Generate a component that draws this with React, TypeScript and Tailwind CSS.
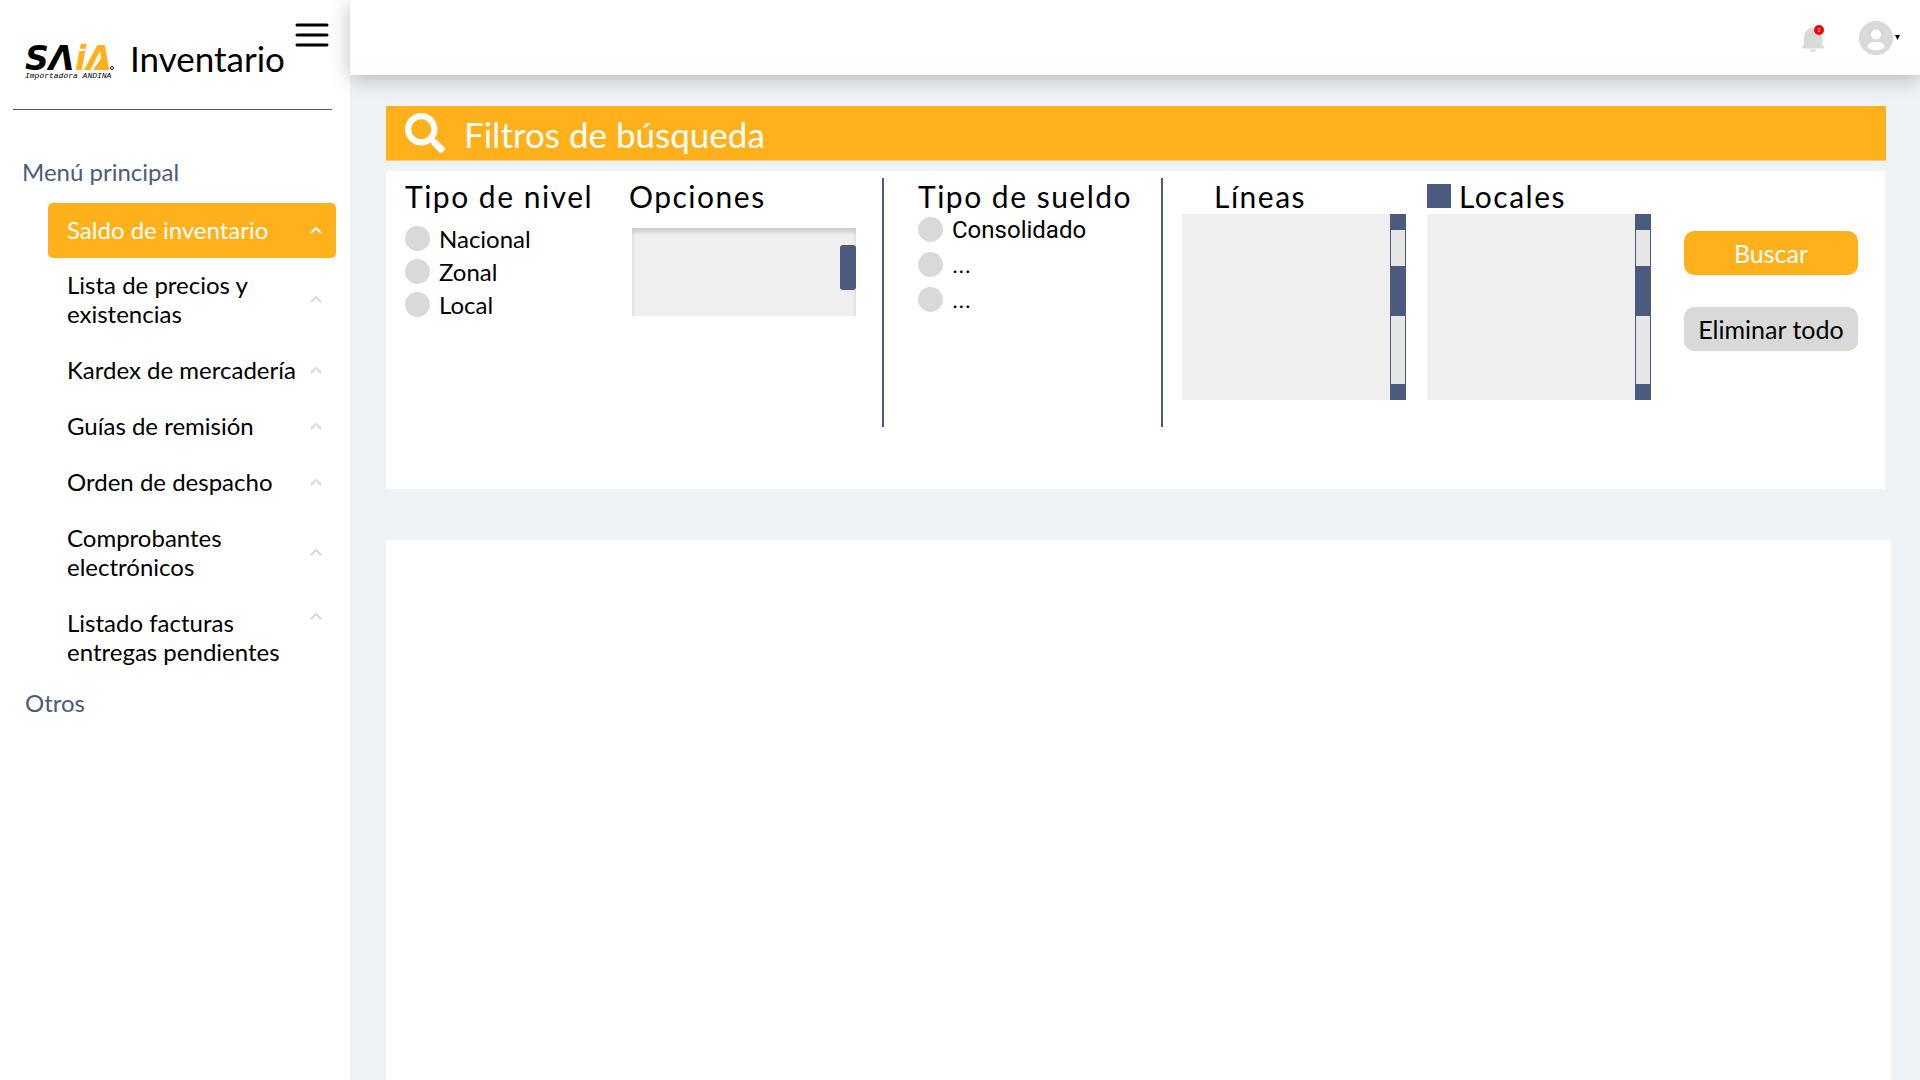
import React from "react";
import { FaSearch } from "react-icons/fa";

const menuItems = [
  { label: "Lista de precios y existencias" },
  { label: "Kardex de mercadería" },
  { label: "Guías de remisión" },
  { label: "Orden de despacho" },
  { label: "Comprobantes electrónicos" },
  { label: "Listado facturas entregas pendientes", top: true },
];

function Chevron({ className }: { className: string }) {
  return (
    <svg className={className} width="12" height="8" viewBox="0 0 12 8" fill="none" aria-hidden="true">
      <path d="M1 7 6 2l5 5" stroke="currentColor" strokeWidth="2" />
    </svg>
  );
}

function Logo() {
  return (
    <svg width="94" height="38" viewBox="0 0 94 38" className="overflow-visible" role="img" aria-label="SAIA Importadora Andina">
      <g fontFamily="DejaVu Sans" fontWeight="700" fontStyle="italic" fontSize="33">
        <text x="1" y="27">SΛ</text>
        <text x="51" y="27" fill="#ffb11b">iΛ</text>
      </g>
      <path d="M69 27 78 14l3 13z" fill="#ffb11b" />
      <circle cx="88" cy="25" r="1.500" fill="none" stroke="#222" strokeWidth="1" />
      <text x="1" y="35" fontFamily="Liberation Mono" fontStyle="italic" fontSize="8">
        Importadora ANDINA
      </text>
    </svg>
  );
}

function Sidebar() {
  return (
    <aside className="w-[350px] shrink-0 bg-white">
      <div className="mr-[18px] ml-[13px] flex h-[110px] items-start border-b border-[#4b5b7e] pl-[11px]">
        <div className="mt-[43px]">
          <Logo />
        </div>
        <h1 className="mt-[37px] ml-3 text-[35px] leading-[42px]">Inventario</h1>
        <button type="button" aria-label="Abrir menú" className="mt-[23px] mr-[3px] ml-auto">
          <svg width="34" height="24" viewBox="0 0 34 24" stroke="#000" strokeWidth="3" strokeLinecap="round">
            <path d="M2 2h30M2 12h30M2 22h30" />
          </svg>
        </button>
      </div>
      <nav className="pt-[47px] text-2xl leading-[29px]">
        <h2 className="pl-[22px] text-[#4b5b7e]">Menú principal</h2>
        <ul className="mt-[17px] mr-[14px] ml-12">
          <li>
            <a href="#saldo" className="mb-3 flex h-[55px] items-center justify-between rounded-[5px] bg-[#ffb11b] pr-[14px] pb-0.5 pl-[19px] text-white">
              Saldo de inventario
              <Chevron className="text-white" />
            </a>
          </li>
          {menuItems.map((item) => (
            <li key={item.label} className="mb-[27px]">
              <a href="#menu" className="flex items-center justify-between pr-[14px] pl-[19px]">
                <span className="w-[230px]">{item.label}</span>
                <Chevron className={item.top ? "mt-1 self-start text-[#d9d9d9]" : "text-[#d9d9d9]"} />
              </a>
            </li>
          ))}
        </ul>
        <h2 className="-mt-[5px] pl-[25px] text-[#4b5b7e]">Otros</h2>
      </nav>
    </aside>
  );
}

function TopBar() {
  return (
    <header className="relative z-10 flex h-[75px] items-center justify-end bg-white pr-5 shadow-[0_4px_20px_rgba(0,0,0,0.25)]">
      <button type="button" aria-label="Notificaciones" className="mr-[34px]">
        <svg width="24" height="28" viewBox="0 0 24 28">
          <path d="M3 20V12.500a9 9 0 0 1 18 0V20c0 1.500 2 2 2 3.500q0 1-1 1H2q-1 0-1-1C1 22 3 21.500 3 20z" fill="#d9d9d9" />
          <path d="M8.500 25.500h7q-1 2.500-3.500 2.500t-3.500-2.500z" fill="#d9d9d9" />
          <circle cx="18" cy="6" r="5" fill="#ff0000" />
          <text x="18" y="8" fontSize="5" textAnchor="middle" fill="#fff" fontFamily="Inter">2</text>
        </svg>
      </button>
      <button type="button" aria-label="Cuenta" className="flex items-center gap-0.5">
        <svg width="34" height="34" viewBox="0 0 34 34">
          <circle cx="17" cy="17" r="17" fill="#d9d9d9" />
          <circle cx="17" cy="13.500" r="5" fill="#fff" />
          <ellipse cx="17" cy="25" rx="8.500" ry="4.200" fill="#fff" />
        </svg>
        <svg width="5" height="5" viewBox="0 0 5 5">
          <path d="M0 0h5L2.500 5z" />
        </svg>
      </button>
    </header>
  );
}

function RadioGroup({ name, options, className, row }: { name: string; options: string[]; className: string; row: string }) {
  return (
    <div className={className}>
      {options.map((option, i) => (
        <label key={i} className={row}>
          <input type="radio" name={name} className="size-[25px] shrink-0 appearance-none rounded-full bg-[#d9d9d9] checked:bg-[#4b5b7e]" />
          {option}
        </label>
      ))}
    </div>
  );
}

function ScrollList({ label }: { label: string }) {
  return (
    <div className="flex h-[186px] w-[224px]">
      <select multiple aria-label={label} className="min-w-0 flex-1 appearance-none overflow-hidden bg-[#efefef]" />
      <div className="flex w-4 flex-col border-x border-[#4b5b7e] bg-[#e6e6e6]">
        <div className="h-4 bg-[#4b5b7e]" />
        <div className="mt-9 h-[50px] bg-[#4b5b7e]" />
        <div className="mt-auto h-4 bg-[#4b5b7e]" />
      </div>
    </div>
  );
}

const heading = "text-[30px] leading-9 tracking-wider";

function Filters() {
  return (
    <section>
      <div className="mr-[34px] flex h-[55px] items-center gap-[19px] border-b border-[#ffd084] bg-[#ffb11b] pl-[19px] text-white">
        <FaSearch size={40} />
        <h2 className="pt-0.5 text-[35px] leading-[42px]">Filtros de búsqueda</h2>
      </div>
      <form className="mt-[10px] mr-[35px] flex h-[318px] items-start bg-white pt-[7px] pr-[27px] pl-[19px]">
        <div className="w-[224px] shrink-0">
          <h3 className={heading}>Tipo de nivel</h3>
          <RadioGroup
            name="nivel"
            options={["Nacional", "Zonal", "Local"]}
            className="mt-2 text-2xl"
            row="flex h-[33px] items-center gap-[9px]"
          />
        </div>
        <div className="w-[253px] shrink-0">
          <h3 className={heading}>Opciones</h3>
          <div className="mt-[14px] ml-[3px] flex h-[88px] w-[224px] bg-[#efefef] shadow-[inset_0_4px_4px_rgba(0,0,0,0.15)]">
            <select multiple aria-label="Opciones" className="min-w-0 flex-1 appearance-none overflow-hidden" />
            <div className="mt-[17px] h-[45px] w-4 rounded-[3px] bg-[#4b5b7e]" />
          </div>
        </div>
        <div className="h-[249px] w-[281px] shrink-0 border-x-2 border-[#4b5b7e] pl-[34px]">
          <h3 className={heading}>Tipo de sueldo</h3>
          <RadioGroup
            name="sueldo"
            options={["Consolidado", "...", "..."]}
            className="-mt-0.5 font-[Roboto] text-2xl"
            row="flex h-[35px] items-center gap-[9px]"
          />
        </div>
        <div className="ml-[19px]">
          <h3 className={heading + " pl-8"}>Líneas</h3>
          <ScrollList label="Líneas" />
        </div>
        <div className="ml-[21px]">
          <label className={"flex items-center gap-2 " + heading}>
            <input type="checkbox" defaultChecked className="size-6 appearance-none bg-[#4b5b7e]" />
            Locales
          </label>
          <ScrollList label="Locales" />
        </div>
        <div className="mt-[53px] ml-auto flex w-[174px] flex-col gap-8 text-[25px] leading-[30px]">
          <button type="submit" className="h-11 rounded-[10px] bg-[#ffb11b] text-white">Buscar</button>
          <button type="reset" className="h-11 rounded-[10px] bg-[#d9d9d9]">Eliminar todo</button>
        </div>
      </form>
    </section>
  );
}

export default function App() {
  return (
    <div className="flex min-h-screen bg-[#eff3f6] font-[Lato,sans-serif] text-black">
      <Sidebar />
      <div className="flex min-w-0 flex-1 flex-col">
        <TopBar />
        <main className="flex flex-1 flex-col pt-[31px] pl-9">
          <Filters />
          <section aria-label="Resultados" className="mt-[51px] mr-[29px] flex-1 bg-white" />
        </main>
      </div>
    </div>
  );
}
